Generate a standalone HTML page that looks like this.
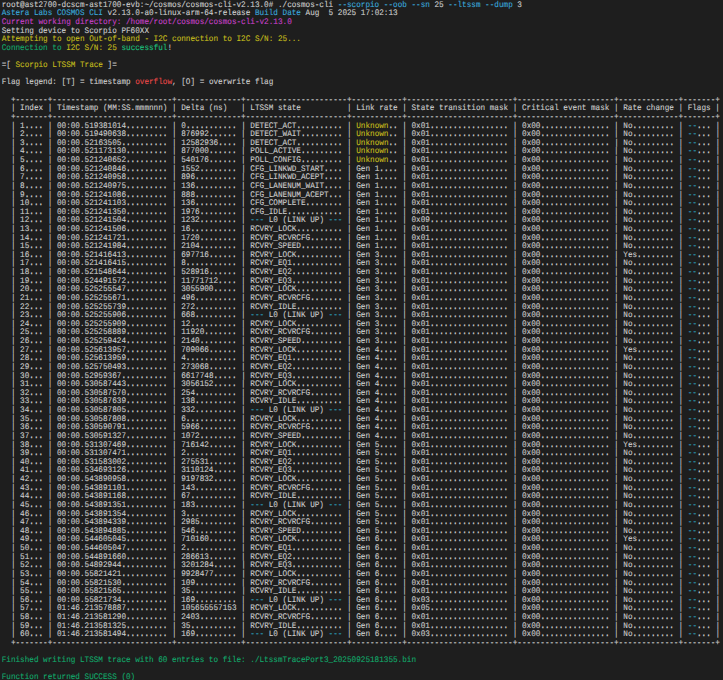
<!DOCTYPE html>
<html><head><meta charset="utf-8"><style>
html,body{margin:0;padding:0;background:#1e1e1e;width:723px;height:680px;overflow:hidden}
svg{position:absolute;left:0;top:0}
text{white-space:pre}
g{fill:currentColor}.cy{color:#3aa8dc}.mg{color:#c840c8}.ye{color:#c4bc1c}.gr{color:#12a86a}.rd{color:#e84848}.dot{color:#cccccc;stroke-width:0.3px}.tl{color:#2a9db8}.gb{color:#1cc07c}
</style></head><body>
<svg width="723" height="680" viewBox="0 0 723 680">
<g transform="scale(1,1.10000)" font-family="Liberation Mono, monospace" font-size="7.6800" style="color:#cccccc" text-rendering="geometricPrecision" stroke="currentColor" stroke-width="0.1">
<text x="1.700" y="6.227" xml:space="preserve">root@ast2700-dcscm-ast1700-evb:~/cosmos/cosmos-cli-v2.13.0# ./cosmos-cli <tspan class="cy">--scorpio --oob --sn</tspan> 25 <tspan class="cy">--ltssm --dump</tspan> 3</text>
<text x="1.700" y="14.065" xml:space="preserve"><tspan class="cy">Astera Labs COSMOS CLI</tspan> v2.13.0-a0-linux-arm-64-release <tspan class="cy">Build Date</tspan> Aug  5 2025 17:02:13</text>
<text x="1.700" y="21.904" xml:space="preserve"><tspan class="mg">Current working directory: /home/root/cosmos/cosmos-cli-v2.13.0</tspan></text>
<text x="1.700" y="29.742" xml:space="preserve">Setting device to Scorpio PF60XX</text>
<text x="1.700" y="37.580" xml:space="preserve"><tspan class="ye">Attempting to open Out-of-band - I2C connection to I2C S/N: 25...</tspan></text>
<text x="1.700" y="45.418" xml:space="preserve"><tspan class="gr">Connection to </tspan><tspan class="ye">I2C S/N: 25</tspan> <tspan class="gb">successful</tspan>!</text>
<text x="1.700" y="61.095" xml:space="preserve">=[ <tspan class="ye">Scorpio LTSSM Trace</tspan> ]=</text>
<text x="1.700" y="76.771" xml:space="preserve">Flag legend: [T] = timestamp <tspan class="rd">overflow</tspan>, [O] = overwrite flag</text>
<text x="1.700" y="92.447" xml:space="preserve">  +-------+--------------------------+--------------+----------------------+-----------+-----------------------+---------------------+-------------+-------+</text>
<text x="1.700" y="100.285" xml:space="preserve">  | Index | Timestamp (MM:SS.mmmnnn) | Delta (ns)   | LTSSM state          | Link rate | State transition mask | Critical event mask | Rate change | Flags |</text>
<text x="1.700" y="108.124" xml:space="preserve">  +-------+--------------------------+--------------+----------------------+-----------+-----------------------+---------------------+-------------+-------+</text>
<text x="1.700" y="115.962" xml:space="preserve">  | 1<tspan class="dot">....</tspan> | 00:00.519381014<tspan class="dot">.........</tspan> | 0<tspan class="dot">...........</tspan> | DETECT_ACT<tspan class="dot">..........</tspan> | <tspan class="ye">Unknown</tspan><tspan class="dot">..</tspan> | 0x01<tspan class="dot">.................</tspan> | 0x00<tspan class="dot">...............</tspan> | No<tspan class="dot">.........</tspan> | <tspan class="tl">--</tspan><tspan class="dot">...</tspan> |</text>
<text x="1.700" y="123.800" xml:space="preserve">  | 2<tspan class="dot">....</tspan> | 00:00.519490638<tspan class="dot">.........</tspan> | 876992<tspan class="dot">......</tspan> | DETECT_WAIT<tspan class="dot">.........</tspan> | <tspan class="ye">Unknown</tspan><tspan class="dot">..</tspan> | 0x01<tspan class="dot">.................</tspan> | 0x00<tspan class="dot">...............</tspan> | No<tspan class="dot">.........</tspan> | <tspan class="tl">--</tspan><tspan class="dot">...</tspan> |</text>
<text x="1.700" y="131.638" xml:space="preserve">  | 3<tspan class="dot">....</tspan> | 00:00.52163505<tspan class="dot">..........</tspan> | 12582936<tspan class="dot">....</tspan> | DETECT_ACT<tspan class="dot">..........</tspan> | <tspan class="ye">Unknown</tspan><tspan class="dot">..</tspan> | 0x01<tspan class="dot">.................</tspan> | 0x00<tspan class="dot">...............</tspan> | No<tspan class="dot">.........</tspan> | <tspan class="tl">--</tspan><tspan class="dot">...</tspan> |</text>
<text x="1.700" y="139.476" xml:space="preserve">  | 4<tspan class="dot">....</tspan> | 00:00.521173130<tspan class="dot">.........</tspan> | 877000<tspan class="dot">......</tspan> | POLL_ACTIVE<tspan class="dot">.........</tspan> | <tspan class="ye">Unknown</tspan><tspan class="dot">..</tspan> | 0x01<tspan class="dot">.................</tspan> | 0x00<tspan class="dot">...............</tspan> | No<tspan class="dot">.........</tspan> | <tspan class="tl">--</tspan><tspan class="dot">...</tspan> |</text>
<text x="1.700" y="147.315" xml:space="preserve">  | 5<tspan class="dot">....</tspan> | 00:00.521240652<tspan class="dot">.........</tspan> | 540176<tspan class="dot">......</tspan> | POLL_CONFIG<tspan class="dot">.........</tspan> | <tspan class="ye">Unknown</tspan><tspan class="dot">..</tspan> | 0x01<tspan class="dot">.................</tspan> | 0x00<tspan class="dot">...............</tspan> | No<tspan class="dot">.........</tspan> | <tspan class="tl">--</tspan><tspan class="dot">...</tspan> |</text>
<text x="1.700" y="155.153" xml:space="preserve">  | 6<tspan class="dot">....</tspan> | 00:00.521240846<tspan class="dot">.........</tspan> | 1552<tspan class="dot">........</tspan> | CFG_LINKWD_START<tspan class="dot">....</tspan> | Gen 1<tspan class="dot">....</tspan> | 0x01<tspan class="dot">.................</tspan> | 0x00<tspan class="dot">...............</tspan> | No<tspan class="dot">.........</tspan> | <tspan class="tl">--</tspan><tspan class="dot">...</tspan> |</text>
<text x="1.700" y="162.991" xml:space="preserve">  | 7<tspan class="dot">....</tspan> | 00:00.521240958<tspan class="dot">.........</tspan> | 896<tspan class="dot">.........</tspan> | CFG_LINKWD_ACEPT<tspan class="dot">....</tspan> | Gen 1<tspan class="dot">....</tspan> | 0x01<tspan class="dot">.................</tspan> | 0x00<tspan class="dot">...............</tspan> | No<tspan class="dot">.........</tspan> | <tspan class="tl">--</tspan><tspan class="dot">...</tspan> |</text>
<text x="1.700" y="170.829" xml:space="preserve">  | 8<tspan class="dot">....</tspan> | 00:00.521240975<tspan class="dot">.........</tspan> | 136<tspan class="dot">.........</tspan> | CFG_LANENUM_WAIT<tspan class="dot">....</tspan> | Gen 1<tspan class="dot">....</tspan> | 0x01<tspan class="dot">.................</tspan> | 0x00<tspan class="dot">...............</tspan> | No<tspan class="dot">.........</tspan> | <tspan class="tl">--</tspan><tspan class="dot">...</tspan> |</text>
<text x="1.700" y="178.667" xml:space="preserve">  | 9<tspan class="dot">....</tspan> | 00:00.521241086<tspan class="dot">.........</tspan> | 888<tspan class="dot">.........</tspan> | CFG_LANENUM_ACEPT<tspan class="dot">...</tspan> | Gen 1<tspan class="dot">....</tspan> | 0x01<tspan class="dot">.................</tspan> | 0x00<tspan class="dot">...............</tspan> | No<tspan class="dot">.........</tspan> | <tspan class="tl">--</tspan><tspan class="dot">...</tspan> |</text>
<text x="1.700" y="186.505" xml:space="preserve">  | 10<tspan class="dot">...</tspan> | 00:00.521241103<tspan class="dot">.........</tspan> | 136<tspan class="dot">.........</tspan> | CFG_COMPLETE<tspan class="dot">........</tspan> | Gen 1<tspan class="dot">....</tspan> | 0x01<tspan class="dot">.................</tspan> | 0x00<tspan class="dot">...............</tspan> | No<tspan class="dot">.........</tspan> | <tspan class="tl">--</tspan><tspan class="dot">...</tspan> |</text>
<text x="1.700" y="194.344" xml:space="preserve">  | 11<tspan class="dot">...</tspan> | 00:00.521241350<tspan class="dot">.........</tspan> | 1976<tspan class="dot">........</tspan> | CFG_IDLE<tspan class="dot">............</tspan> | Gen 1<tspan class="dot">....</tspan> | 0x01<tspan class="dot">.................</tspan> | 0x00<tspan class="dot">...............</tspan> | No<tspan class="dot">.........</tspan> | <tspan class="tl">--</tspan><tspan class="dot">...</tspan> |</text>
<text x="1.700" y="202.182" xml:space="preserve">  | 12<tspan class="dot">...</tspan> | 00:00.521241504<tspan class="dot">.........</tspan> | 1232<tspan class="dot">........</tspan> | <tspan class="tl">---</tspan> L0 (LINK UP) <tspan class="tl">---</tspan> | Gen 1<tspan class="dot">....</tspan> | 0x09<tspan class="dot">.................</tspan> | 0x00<tspan class="dot">...............</tspan> | No<tspan class="dot">.........</tspan> | <tspan class="tl">--</tspan><tspan class="dot">...</tspan> |</text>
<text x="1.700" y="210.020" xml:space="preserve">  | 13<tspan class="dot">...</tspan> | 00:00.521241506<tspan class="dot">.........</tspan> | 16<tspan class="dot">..........</tspan> | RCVRY_LOCK<tspan class="dot">..........</tspan> | Gen 1<tspan class="dot">....</tspan> | 0x01<tspan class="dot">.................</tspan> | 0x00<tspan class="dot">...............</tspan> | No<tspan class="dot">.........</tspan> | <tspan class="tl">--</tspan><tspan class="dot">...</tspan> |</text>
<text x="1.700" y="217.858" xml:space="preserve">  | 14<tspan class="dot">...</tspan> | 00:00.521241721<tspan class="dot">.........</tspan> | 1720<tspan class="dot">........</tspan> | RCVRY_RCVRCFG<tspan class="dot">.......</tspan> | Gen 1<tspan class="dot">....</tspan> | 0x01<tspan class="dot">.................</tspan> | 0x00<tspan class="dot">...............</tspan> | No<tspan class="dot">.........</tspan> | <tspan class="tl">--</tspan><tspan class="dot">...</tspan> |</text>
<text x="1.700" y="225.696" xml:space="preserve">  | 15<tspan class="dot">...</tspan> | 00:00.521241984<tspan class="dot">.........</tspan> | 2104<tspan class="dot">........</tspan> | RCVRY_SPEED<tspan class="dot">.........</tspan> | Gen 1<tspan class="dot">....</tspan> | 0x01<tspan class="dot">.................</tspan> | 0x00<tspan class="dot">...............</tspan> | No<tspan class="dot">.........</tspan> | <tspan class="tl">--</tspan><tspan class="dot">...</tspan> |</text>
<text x="1.700" y="233.535" xml:space="preserve">  | 16<tspan class="dot">...</tspan> | 00:00.521416413<tspan class="dot">.........</tspan> | 697716<tspan class="dot">......</tspan> | RCVRY_LOCK<tspan class="dot">..........</tspan> | Gen 3<tspan class="dot">....</tspan> | 0x01<tspan class="dot">.................</tspan> | 0x00<tspan class="dot">...............</tspan> | Yes<tspan class="dot">........</tspan> | <tspan class="tl">--</tspan><tspan class="dot">...</tspan> |</text>
<text x="1.700" y="241.373" xml:space="preserve">  | 17<tspan class="dot">...</tspan> | 00:00.521416415<tspan class="dot">.........</tspan> | 8<tspan class="dot">...........</tspan> | RCVRY_EQ1<tspan class="dot">...........</tspan> | Gen 3<tspan class="dot">....</tspan> | 0x01<tspan class="dot">.................</tspan> | 0x00<tspan class="dot">...............</tspan> | No<tspan class="dot">.........</tspan> | <tspan class="tl">--</tspan><tspan class="dot">...</tspan> |</text>
<text x="1.700" y="249.211" xml:space="preserve">  | 18<tspan class="dot">...</tspan> | 00:00.521548644<tspan class="dot">.........</tspan> | 528916<tspan class="dot">......</tspan> | RCVRY_EQ2<tspan class="dot">...........</tspan> | Gen 3<tspan class="dot">....</tspan> | 0x01<tspan class="dot">.................</tspan> | 0x00<tspan class="dot">...............</tspan> | No<tspan class="dot">.........</tspan> | <tspan class="tl">--</tspan><tspan class="dot">...</tspan> |</text>
<text x="1.700" y="257.049" xml:space="preserve">  | 19<tspan class="dot">...</tspan> | 00:00.524491572<tspan class="dot">.........</tspan> | 11771712<tspan class="dot">....</tspan> | RCVRY_EQ3<tspan class="dot">...........</tspan> | Gen 3<tspan class="dot">....</tspan> | 0x01<tspan class="dot">.................</tspan> | 0x00<tspan class="dot">...............</tspan> | No<tspan class="dot">.........</tspan> | <tspan class="tl">--</tspan><tspan class="dot">...</tspan> |</text>
<text x="1.700" y="264.887" xml:space="preserve">  | 20<tspan class="dot">...</tspan> | 00:00.525255547<tspan class="dot">.........</tspan> | 3055900<tspan class="dot">.....</tspan> | RCVRY_LOCK<tspan class="dot">..........</tspan> | Gen 3<tspan class="dot">....</tspan> | 0x01<tspan class="dot">.................</tspan> | 0x00<tspan class="dot">...............</tspan> | No<tspan class="dot">.........</tspan> | <tspan class="tl">--</tspan><tspan class="dot">...</tspan> |</text>
<text x="1.700" y="272.725" xml:space="preserve">  | 21<tspan class="dot">...</tspan> | 00:00.525255671<tspan class="dot">.........</tspan> | 496<tspan class="dot">.........</tspan> | RCVRY_RCVRCFG<tspan class="dot">.......</tspan> | Gen 3<tspan class="dot">....</tspan> | 0x01<tspan class="dot">.................</tspan> | 0x00<tspan class="dot">...............</tspan> | No<tspan class="dot">.........</tspan> | <tspan class="tl">--</tspan><tspan class="dot">...</tspan> |</text>
<text x="1.700" y="280.564" xml:space="preserve">  | 22<tspan class="dot">...</tspan> | 00:00.525255739<tspan class="dot">.........</tspan> | 272<tspan class="dot">.........</tspan> | RCVRY_IDLE<tspan class="dot">..........</tspan> | Gen 3<tspan class="dot">....</tspan> | 0x01<tspan class="dot">.................</tspan> | 0x00<tspan class="dot">...............</tspan> | No<tspan class="dot">.........</tspan> | <tspan class="tl">--</tspan><tspan class="dot">...</tspan> |</text>
<text x="1.700" y="288.402" xml:space="preserve">  | 23<tspan class="dot">...</tspan> | 00:00.525255906<tspan class="dot">.........</tspan> | 668<tspan class="dot">.........</tspan> | <tspan class="tl">---</tspan> L0 (LINK UP) <tspan class="tl">---</tspan> | Gen 3<tspan class="dot">....</tspan> | 0x01<tspan class="dot">.................</tspan> | 0x00<tspan class="dot">...............</tspan> | No<tspan class="dot">.........</tspan> | <tspan class="tl">--</tspan><tspan class="dot">...</tspan> |</text>
<text x="1.700" y="296.240" xml:space="preserve">  | 24<tspan class="dot">...</tspan> | 00:00.525255909<tspan class="dot">.........</tspan> | 12<tspan class="dot">..........</tspan> | RCVRY_LOCK<tspan class="dot">..........</tspan> | Gen 3<tspan class="dot">....</tspan> | 0x01<tspan class="dot">.................</tspan> | 0x00<tspan class="dot">...............</tspan> | No<tspan class="dot">.........</tspan> | <tspan class="tl">--</tspan><tspan class="dot">...</tspan> |</text>
<text x="1.700" y="304.078" xml:space="preserve">  | 25<tspan class="dot">...</tspan> | 00:00.525258889<tspan class="dot">.........</tspan> | 11920<tspan class="dot">.......</tspan> | RCVRY_RCVRCFG<tspan class="dot">.......</tspan> | Gen 3<tspan class="dot">....</tspan> | 0x01<tspan class="dot">.................</tspan> | 0x00<tspan class="dot">...............</tspan> | No<tspan class="dot">.........</tspan> | <tspan class="tl">--</tspan><tspan class="dot">...</tspan> |</text>
<text x="1.700" y="311.916" xml:space="preserve">  | 26<tspan class="dot">...</tspan> | 00:00.525259424<tspan class="dot">.........</tspan> | 2140<tspan class="dot">........</tspan> | RCVRY_SPEED<tspan class="dot">.........</tspan> | Gen 3<tspan class="dot">....</tspan> | 0x01<tspan class="dot">.................</tspan> | 0x00<tspan class="dot">...............</tspan> | No<tspan class="dot">.........</tspan> | <tspan class="tl">--</tspan><tspan class="dot">...</tspan> |</text>
<text x="1.700" y="319.755" xml:space="preserve">  | 27<tspan class="dot">...</tspan> | 00:00.525613957<tspan class="dot">.........</tspan> | 709066<tspan class="dot">......</tspan> | RCVRY_LOCK<tspan class="dot">..........</tspan> | Gen 4<tspan class="dot">....</tspan> | 0x01<tspan class="dot">.................</tspan> | 0x00<tspan class="dot">...............</tspan> | Yes<tspan class="dot">........</tspan> | <tspan class="tl">--</tspan><tspan class="dot">...</tspan> |</text>
<text x="1.700" y="327.593" xml:space="preserve">  | 28<tspan class="dot">...</tspan> | 00:00.525613959<tspan class="dot">.........</tspan> | 4<tspan class="dot">...........</tspan> | RCVRY_EQ1<tspan class="dot">...........</tspan> | Gen 4<tspan class="dot">....</tspan> | 0x01<tspan class="dot">.................</tspan> | 0x00<tspan class="dot">...............</tspan> | No<tspan class="dot">.........</tspan> | <tspan class="tl">--</tspan><tspan class="dot">...</tspan> |</text>
<text x="1.700" y="335.431" xml:space="preserve">  | 29<tspan class="dot">...</tspan> | 00:00.525750493<tspan class="dot">.........</tspan> | 273068<tspan class="dot">......</tspan> | RCVRY_EQ2<tspan class="dot">...........</tspan> | Gen 4<tspan class="dot">....</tspan> | 0x01<tspan class="dot">.................</tspan> | 0x00<tspan class="dot">...............</tspan> | No<tspan class="dot">.........</tspan> | <tspan class="tl">--</tspan><tspan class="dot">...</tspan> |</text>
<text x="1.700" y="343.269" xml:space="preserve">  | 30<tspan class="dot">...</tspan> | 00:00.52959367<tspan class="dot">..........</tspan> | 6617748<tspan class="dot">.....</tspan> | RCVRY_EQ3<tspan class="dot">...........</tspan> | Gen 4<tspan class="dot">....</tspan> | 0x01<tspan class="dot">.................</tspan> | 0x00<tspan class="dot">...............</tspan> | No<tspan class="dot">.........</tspan> | <tspan class="tl">--</tspan><tspan class="dot">...</tspan> |</text>
<text x="1.700" y="351.107" xml:space="preserve">  | 31<tspan class="dot">...</tspan> | 00:00.530587443<tspan class="dot">.........</tspan> | 3056152<tspan class="dot">.....</tspan> | RCVRY_LOCK<tspan class="dot">..........</tspan> | Gen 4<tspan class="dot">....</tspan> | 0x01<tspan class="dot">.................</tspan> | 0x00<tspan class="dot">...............</tspan> | No<tspan class="dot">.........</tspan> | <tspan class="tl">--</tspan><tspan class="dot">...</tspan> |</text>
<text x="1.700" y="358.945" xml:space="preserve">  | 32<tspan class="dot">...</tspan> | 00:00.530587570<tspan class="dot">.........</tspan> | 254<tspan class="dot">.........</tspan> | RCVRY_RCVRCFG<tspan class="dot">.......</tspan> | Gen 4<tspan class="dot">....</tspan> | 0x01<tspan class="dot">.................</tspan> | 0x00<tspan class="dot">...............</tspan> | No<tspan class="dot">.........</tspan> | <tspan class="tl">--</tspan><tspan class="dot">...</tspan> |</text>
<text x="1.700" y="366.784" xml:space="preserve">  | 33<tspan class="dot">...</tspan> | 00:00.530587639<tspan class="dot">.........</tspan> | 138<tspan class="dot">.........</tspan> | RCVRY_IDLE<tspan class="dot">..........</tspan> | Gen 4<tspan class="dot">....</tspan> | 0x01<tspan class="dot">.................</tspan> | 0x00<tspan class="dot">...............</tspan> | No<tspan class="dot">.........</tspan> | <tspan class="tl">--</tspan><tspan class="dot">...</tspan> |</text>
<text x="1.700" y="374.622" xml:space="preserve">  | 34<tspan class="dot">...</tspan> | 00:00.530587805<tspan class="dot">.........</tspan> | 332<tspan class="dot">.........</tspan> | <tspan class="tl">---</tspan> L0 (LINK UP) <tspan class="tl">---</tspan> | Gen 4<tspan class="dot">....</tspan> | 0x01<tspan class="dot">.................</tspan> | 0x00<tspan class="dot">...............</tspan> | No<tspan class="dot">.........</tspan> | <tspan class="tl">--</tspan><tspan class="dot">...</tspan> |</text>
<text x="1.700" y="382.460" xml:space="preserve">  | 35<tspan class="dot">...</tspan> | 00:00.530587808<tspan class="dot">.........</tspan> | 6<tspan class="dot">...........</tspan> | RCVRY_LOCK<tspan class="dot">..........</tspan> | Gen 4<tspan class="dot">....</tspan> | 0x01<tspan class="dot">.................</tspan> | 0x00<tspan class="dot">...............</tspan> | No<tspan class="dot">.........</tspan> | <tspan class="tl">--</tspan><tspan class="dot">...</tspan> |</text>
<text x="1.700" y="390.298" xml:space="preserve">  | 36<tspan class="dot">...</tspan> | 00:00.530590791<tspan class="dot">.........</tspan> | 5966<tspan class="dot">........</tspan> | RCVRY_RCVRCFG<tspan class="dot">.......</tspan> | Gen 4<tspan class="dot">....</tspan> | 0x01<tspan class="dot">.................</tspan> | 0x00<tspan class="dot">...............</tspan> | No<tspan class="dot">.........</tspan> | <tspan class="tl">--</tspan><tspan class="dot">...</tspan> |</text>
<text x="1.700" y="398.136" xml:space="preserve">  | 37<tspan class="dot">...</tspan> | 00:00.530591327<tspan class="dot">.........</tspan> | 1072<tspan class="dot">........</tspan> | RCVRY_SPEED<tspan class="dot">.........</tspan> | Gen 4<tspan class="dot">....</tspan> | 0x01<tspan class="dot">.................</tspan> | 0x00<tspan class="dot">...............</tspan> | No<tspan class="dot">.........</tspan> | <tspan class="tl">--</tspan><tspan class="dot">...</tspan> |</text>
<text x="1.700" y="405.975" xml:space="preserve">  | 38<tspan class="dot">...</tspan> | 00:00.531307469<tspan class="dot">.........</tspan> | 716142<tspan class="dot">......</tspan> | RCVRY_LOCK<tspan class="dot">..........</tspan> | Gen 5<tspan class="dot">....</tspan> | 0x01<tspan class="dot">.................</tspan> | 0x00<tspan class="dot">...............</tspan> | Yes<tspan class="dot">........</tspan> | <tspan class="tl">--</tspan><tspan class="dot">...</tspan> |</text>
<text x="1.700" y="413.813" xml:space="preserve">  | 39<tspan class="dot">...</tspan> | 00:00.531307471<tspan class="dot">.........</tspan> | 2<tspan class="dot">...........</tspan> | RCVRY_EQ1<tspan class="dot">...........</tspan> | Gen 5<tspan class="dot">....</tspan> | 0x01<tspan class="dot">.................</tspan> | 0x00<tspan class="dot">...............</tspan> | No<tspan class="dot">.........</tspan> | <tspan class="tl">--</tspan><tspan class="dot">...</tspan> |</text>
<text x="1.700" y="421.651" xml:space="preserve">  | 40<tspan class="dot">...</tspan> | 00:00.531583002<tspan class="dot">.........</tspan> | 275531<tspan class="dot">......</tspan> | RCVRY_EQ2<tspan class="dot">...........</tspan> | Gen 5<tspan class="dot">....</tspan> | 0x01<tspan class="dot">.................</tspan> | 0x00<tspan class="dot">...............</tspan> | No<tspan class="dot">.........</tspan> | <tspan class="tl">--</tspan><tspan class="dot">...</tspan> |</text>
<text x="1.700" y="429.489" xml:space="preserve">  | 41<tspan class="dot">...</tspan> | 00:00.534693126<tspan class="dot">.........</tspan> | 3110124<tspan class="dot">.....</tspan> | RCVRY_EQ3<tspan class="dot">...........</tspan> | Gen 5<tspan class="dot">....</tspan> | 0x01<tspan class="dot">.................</tspan> | 0x00<tspan class="dot">...............</tspan> | No<tspan class="dot">.........</tspan> | <tspan class="tl">--</tspan><tspan class="dot">...</tspan> |</text>
<text x="1.700" y="437.327" xml:space="preserve">  | 42<tspan class="dot">...</tspan> | 00:00.543890958<tspan class="dot">.........</tspan> | 9197832<tspan class="dot">.....</tspan> | RCVRY_LOCK<tspan class="dot">..........</tspan> | Gen 5<tspan class="dot">....</tspan> | 0x01<tspan class="dot">.................</tspan> | 0x00<tspan class="dot">...............</tspan> | No<tspan class="dot">.........</tspan> | <tspan class="tl">--</tspan><tspan class="dot">...</tspan> |</text>
<text x="1.700" y="445.165" xml:space="preserve">  | 43<tspan class="dot">...</tspan> | 00:00.543891101<tspan class="dot">.........</tspan> | 143<tspan class="dot">.........</tspan> | RCVRY_RCVRCFG<tspan class="dot">.......</tspan> | Gen 5<tspan class="dot">....</tspan> | 0x01<tspan class="dot">.................</tspan> | 0x00<tspan class="dot">...............</tspan> | No<tspan class="dot">.........</tspan> | <tspan class="tl">--</tspan><tspan class="dot">...</tspan> |</text>
<text x="1.700" y="453.004" xml:space="preserve">  | 44<tspan class="dot">...</tspan> | 00:00.543891168<tspan class="dot">.........</tspan> | 67<tspan class="dot">..........</tspan> | RCVRY_IDLE<tspan class="dot">..........</tspan> | Gen 5<tspan class="dot">....</tspan> | 0x01<tspan class="dot">.................</tspan> | 0x00<tspan class="dot">...............</tspan> | No<tspan class="dot">.........</tspan> | <tspan class="tl">--</tspan><tspan class="dot">...</tspan> |</text>
<text x="1.700" y="460.842" xml:space="preserve">  | 45<tspan class="dot">...</tspan> | 00:00.543891351<tspan class="dot">.........</tspan> | 183<tspan class="dot">.........</tspan> | <tspan class="tl">---</tspan> L0 (LINK UP) <tspan class="tl">---</tspan> | Gen 5<tspan class="dot">....</tspan> | 0x01<tspan class="dot">.................</tspan> | 0x00<tspan class="dot">...............</tspan> | No<tspan class="dot">.........</tspan> | <tspan class="tl">--</tspan><tspan class="dot">...</tspan> |</text>
<text x="1.700" y="468.680" xml:space="preserve">  | 46<tspan class="dot">...</tspan> | 00:00.543891354<tspan class="dot">.........</tspan> | 3<tspan class="dot">...........</tspan> | RCVRY_LOCK<tspan class="dot">..........</tspan> | Gen 5<tspan class="dot">....</tspan> | 0x01<tspan class="dot">.................</tspan> | 0x00<tspan class="dot">...............</tspan> | No<tspan class="dot">.........</tspan> | <tspan class="tl">--</tspan><tspan class="dot">...</tspan> |</text>
<text x="1.700" y="476.518" xml:space="preserve">  | 47<tspan class="dot">...</tspan> | 00:00.543894339<tspan class="dot">.........</tspan> | 2985<tspan class="dot">........</tspan> | RCVRY_RCVRCFG<tspan class="dot">.......</tspan> | Gen 5<tspan class="dot">....</tspan> | 0x01<tspan class="dot">.................</tspan> | 0x00<tspan class="dot">...............</tspan> | No<tspan class="dot">.........</tspan> | <tspan class="tl">--</tspan><tspan class="dot">...</tspan> |</text>
<text x="1.700" y="484.356" xml:space="preserve">  | 48<tspan class="dot">...</tspan> | 00:00.543894885<tspan class="dot">.........</tspan> | 546<tspan class="dot">.........</tspan> | RCVRY_SPEED<tspan class="dot">.........</tspan> | Gen 5<tspan class="dot">....</tspan> | 0x01<tspan class="dot">.................</tspan> | 0x00<tspan class="dot">...............</tspan> | No<tspan class="dot">.........</tspan> | <tspan class="tl">--</tspan><tspan class="dot">...</tspan> |</text>
<text x="1.700" y="492.195" xml:space="preserve">  | 49<tspan class="dot">...</tspan> | 00:00.544605045<tspan class="dot">.........</tspan> | 710160<tspan class="dot">......</tspan> | RCVRY_LOCK<tspan class="dot">..........</tspan> | Gen 6<tspan class="dot">....</tspan> | 0x01<tspan class="dot">.................</tspan> | 0x00<tspan class="dot">...............</tspan> | Yes<tspan class="dot">........</tspan> | <tspan class="tl">--</tspan><tspan class="dot">...</tspan> |</text>
<text x="1.700" y="500.033" xml:space="preserve">  | 50<tspan class="dot">...</tspan> | 00:00.544605047<tspan class="dot">.........</tspan> | 2<tspan class="dot">...........</tspan> | RCVRY_EQ1<tspan class="dot">...........</tspan> | Gen 6<tspan class="dot">....</tspan> | 0x01<tspan class="dot">.................</tspan> | 0x00<tspan class="dot">...............</tspan> | No<tspan class="dot">.........</tspan> | <tspan class="tl">--</tspan><tspan class="dot">...</tspan> |</text>
<text x="1.700" y="507.871" xml:space="preserve">  | 51<tspan class="dot">...</tspan> | 00:00.544891660<tspan class="dot">.........</tspan> | 286613<tspan class="dot">......</tspan> | RCVRY_EQ2<tspan class="dot">...........</tspan> | Gen 6<tspan class="dot">....</tspan> | 0x01<tspan class="dot">.................</tspan> | 0x00<tspan class="dot">...............</tspan> | No<tspan class="dot">.........</tspan> | <tspan class="tl">--</tspan><tspan class="dot">...</tspan> |</text>
<text x="1.700" y="515.709" xml:space="preserve">  | 52<tspan class="dot">...</tspan> | 00:00.54892944<tspan class="dot">..........</tspan> | 3201284<tspan class="dot">.....</tspan> | RCVRY_EQ3<tspan class="dot">...........</tspan> | Gen 6<tspan class="dot">....</tspan> | 0x01<tspan class="dot">.................</tspan> | 0x00<tspan class="dot">...............</tspan> | No<tspan class="dot">.........</tspan> | <tspan class="tl">--</tspan><tspan class="dot">...</tspan> |</text>
<text x="1.700" y="523.547" xml:space="preserve">  | 53<tspan class="dot">...</tspan> | 00:00.55821421<tspan class="dot">..........</tspan> | 9928477<tspan class="dot">.....</tspan> | RCVRY_LOCK<tspan class="dot">..........</tspan> | Gen 6<tspan class="dot">....</tspan> | 0x01<tspan class="dot">.................</tspan> | 0x00<tspan class="dot">...............</tspan> | No<tspan class="dot">.........</tspan> | <tspan class="tl">--</tspan><tspan class="dot">...</tspan> |</text>
<text x="1.700" y="531.385" xml:space="preserve">  | 54<tspan class="dot">...</tspan> | 00:00.55821530<tspan class="dot">..........</tspan> | 109<tspan class="dot">.........</tspan> | RCVRY_RCVRCFG<tspan class="dot">.......</tspan> | Gen 6<tspan class="dot">....</tspan> | 0x01<tspan class="dot">.................</tspan> | 0x00<tspan class="dot">...............</tspan> | No<tspan class="dot">.........</tspan> | <tspan class="tl">--</tspan><tspan class="dot">...</tspan> |</text>
<text x="1.700" y="539.224" xml:space="preserve">  | 55<tspan class="dot">...</tspan> | 00:00.55821565<tspan class="dot">..........</tspan> | 35<tspan class="dot">..........</tspan> | RCVRY_IDLE<tspan class="dot">..........</tspan> | Gen 6<tspan class="dot">....</tspan> | 0x01<tspan class="dot">.................</tspan> | 0x00<tspan class="dot">...............</tspan> | No<tspan class="dot">.........</tspan> | <tspan class="tl">--</tspan><tspan class="dot">...</tspan> |</text>
<text x="1.700" y="547.062" xml:space="preserve">  | 56<tspan class="dot">...</tspan> | 00:00.55821734<tspan class="dot">..........</tspan> | 169<tspan class="dot">.........</tspan> | <tspan class="tl">---</tspan> L0 (LINK UP) <tspan class="tl">---</tspan> | Gen 6<tspan class="dot">....</tspan> | 0x03<tspan class="dot">.................</tspan> | 0x00<tspan class="dot">...............</tspan> | No<tspan class="dot">.........</tspan> | <tspan class="tl">--</tspan><tspan class="dot">...</tspan> |</text>
<text x="1.700" y="554.900" xml:space="preserve">  | 57<tspan class="dot">...</tspan> | 01:46.213578887<tspan class="dot">.........</tspan> | 105655557153 | RCVRY_LOCK<tspan class="dot">..........</tspan> | Gen 6<tspan class="dot">....</tspan> | 0x05<tspan class="dot">.................</tspan> | 0x00<tspan class="dot">...............</tspan> | No<tspan class="dot">.........</tspan> | <tspan class="tl">--</tspan><tspan class="dot">...</tspan> |</text>
<text x="1.700" y="562.738" xml:space="preserve">  | 58<tspan class="dot">...</tspan> | 01:46.213581290<tspan class="dot">.........</tspan> | 2403<tspan class="dot">........</tspan> | RCVRY_RCVRCFG<tspan class="dot">.......</tspan> | Gen 6<tspan class="dot">....</tspan> | 0x01<tspan class="dot">.................</tspan> | 0x00<tspan class="dot">...............</tspan> | No<tspan class="dot">.........</tspan> | <tspan class="tl">--</tspan><tspan class="dot">...</tspan> |</text>
<text x="1.700" y="570.576" xml:space="preserve">  | 59<tspan class="dot">...</tspan> | 01:46.213581325<tspan class="dot">.........</tspan> | 35<tspan class="dot">..........</tspan> | RCVRY_IDLE<tspan class="dot">..........</tspan> | Gen 6<tspan class="dot">....</tspan> | 0x01<tspan class="dot">.................</tspan> | 0x00<tspan class="dot">...............</tspan> | No<tspan class="dot">.........</tspan> | <tspan class="tl">--</tspan><tspan class="dot">...</tspan> |</text>
<text x="1.700" y="578.415" xml:space="preserve">  | 60<tspan class="dot">...</tspan> | 01:46.213581494<tspan class="dot">.........</tspan> | 169<tspan class="dot">.........</tspan> | <tspan class="tl">---</tspan> L0 (LINK UP) <tspan class="tl">---</tspan> | Gen 6<tspan class="dot">....</tspan> | 0x03<tspan class="dot">.................</tspan> | 0x00<tspan class="dot">...............</tspan> | No<tspan class="dot">.........</tspan> | <tspan class="tl">--</tspan><tspan class="dot">...</tspan> |</text>
<text x="1.700" y="586.253" xml:space="preserve">  +-------+--------------------------+--------------+----------------------+-----------+-----------------------+---------------------+-------------+-------+</text>
<text x="1.700" y="601.929" xml:space="preserve"><tspan class="gr">Finished writing LTSSM trace with 60 entries to file: ./LtssmTracePort3_20250925181355.bin</tspan></text>
<text x="1.700" y="617.605" xml:space="preserve"><tspan class="gr">Function returned SUCCESS (0)</tspan></text>
</g></svg></body></html>
